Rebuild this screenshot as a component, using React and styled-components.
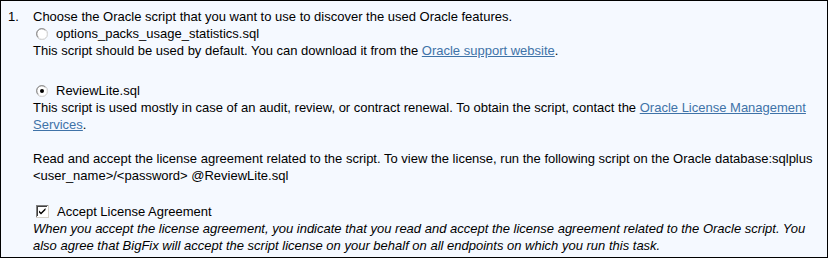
import React from "react";
import styled, { createGlobalStyle } from "styled-components";

const Global = createGlobalStyle`
  html, body { margin: 0; padding: 0; background: #ffffff; }
  body { font-family: "Liberation Sans", Arial, sans-serif; }
`;

const Panel = styled.div`
  box-sizing: border-box;
  width: 828px;
  height: 258px;
  border: 1px solid #000;
  background: #f5f9ff;
  overflow: hidden;
  display: flex;
  padding: 7px 10px 0 0;
  font-family: "Liberation Sans", Arial, sans-serif;
  font-size: 13px;
  line-height: 17px;
  color: #000;
`;

const Num = styled.div`
  flex: 0 0 32px;
  padding-left: 7px;
  box-sizing: border-box;
`;

const Content = styled.div`
  flex: 1;
  min-width: 0;
`;

const Line = styled.p`
  margin: 0 0 ${(p) => p.$after || 0}px 0;
`;

const OptionRow = styled.label`
  display: flex;
  align-items: center;
  gap: 8px;
  padding-left: 3px;
  height: 17px;
`;

const Link = styled.a`
  color: #3f73a8;
  text-decoration: underline;
  cursor: pointer;
`;

const Italic = styled.p`
  margin: 0;
  font-style: italic;
`;

const Glyph = styled.svg`
  flex: 0 0 auto;
  display: block;
`;

function Radio({ checked }) {
  return (
    <Glyph width="12" height="12" viewBox="0 0 12 12">
      <circle cx="6" cy="6" r="5.5" fill="#fff" stroke="#b4b4b4" />
      <path d="M2.2 9.2 A4.6 4.6 0 0 1 9.2 2.2" fill="none" stroke="#8a8a8a" strokeWidth="1" />
      <path d="M9.8 2.8 A4.6 4.6 0 0 1 2.8 9.8" fill="none" stroke="#ececec" strokeWidth="1" />
      {checked && <circle cx="6" cy="6" r="2" fill="#000" />}
    </Glyph>
  );
}

function Checkbox({ checked }) {
  return (
    <Glyph width="13" height="13" viewBox="0 0 13 13">
      <rect x="0" y="0" width="13" height="13" fill="#d4d0c8" />
      <rect x="0" y="0" width="12" height="12" fill="#808080" />
      <rect x="1" y="1" width="11" height="11" fill="#ffffff" />
      <rect x="1" y="1" width="10" height="10" fill="#404040" />
      <rect x="2" y="2" width="9" height="9" fill="#ffffff" />
      {checked && (
        <path d="M3 5.5 L5 7.5 L9.5 3 L9.5 5 L5 9.5 L3 7.5 Z" fill="#000" />
      )}
    </Glyph>
  );
}

export default function App() {
  return (
    <>
      <Global />
      <Panel>
        <Num>1.</Num>
        <Content>
          <Line>Choose the Oracle script that you want to use to discover the used Oracle features.</Line>
          <OptionRow>
            <Radio />
            <span>options_packs_usage_statistics.sql</span>
          </OptionRow>
          <Line $after={23}>
            This script should be used by default. You can download it from the{" "}
            <Link>Oracle support website</Link>.
          </Line>
          <OptionRow>
            <Radio checked />
            <span>ReviewLite.sql</span>
          </OptionRow>
          <Line $after={17}>
            This script is used mostly in case of an audit, review, or contract renewal. To obtain the script, contact the{" "}
            <Link>Oracle License Management Services</Link>.
          </Line>
          <Line $after={19}>
            Read and accept the license agreement related to the script. To view the license, run the following script on the Oracle database:sqlplus &lt;user_name&gt;/&lt;password&gt; @ReviewLite.sql
          </Line>
          <OptionRow>
            <Checkbox checked />
            <span>Accept License Agreement</span>
          </OptionRow>
          <Italic>
            When you accept the license agreement, you indicate that you read and accept the license agreement related to the Oracle script. You also agree that BigFix will accept the script license on your behalf on all endpoints on which you run this task.
          </Italic>
        </Content>
      </Panel>
    </>
  );
}
